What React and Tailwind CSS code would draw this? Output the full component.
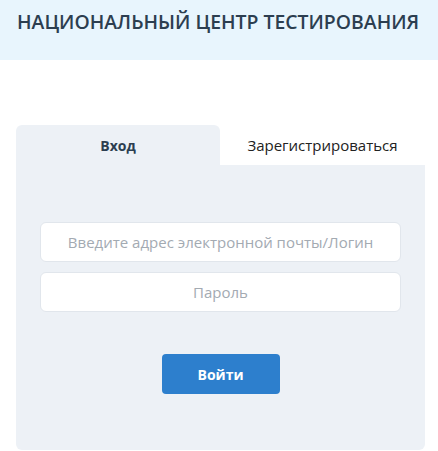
export default function App() {
  return (
    <div className="min-h-[451px] bg-white font-['Open_Sans','Noto_Sans',sans-serif]">
      {/* Header */}
      <header className="h-[60px] bg-[#e8f5fd] pl-[17px] pt-[10px]">
        <h1 className="text-[19.4px] font-semibold leading-6 text-[#2c3e50] whitespace-nowrap">
          НАЦИОНАЛЬНЫЙ ЦЕНТР ТЕСТИРОВАНИЯ
        </h1>
      </header>

      {/* Login card */}
      <div className="mx-4 mt-[65px] w-[409px]">
        <div className="flex h-10">
          <button className="w-[204px] rounded-t-md bg-[#edf1f6] text-[14px] font-bold text-[#2c3e50]">
            Вход
          </button>
          <button className="flex-1 bg-white text-[15px] text-[#222]">
            Зарегистрироваться
          </button>
        </div>
        <div className="h-[285px] rounded-b-md bg-[#edf1f6] px-6 pt-[57px]">
          <div className="flex flex-col gap-[10px]">
            <input
              placeholder="Введите адрес электронной почты/Логин"
              className="h-10 w-full rounded-md border border-[#e1e6ec] bg-white text-center text-[15px] placeholder:text-[#a3aab2] outline-none"
            />
            <input
              type="password"
              placeholder="Пароль"
              className="h-10 w-full rounded-md border border-[#e1e6ec] bg-white text-center text-[15px] placeholder:text-[#a3aab2] outline-none"
            />
          </div>
          <div className="mt-[42px] flex justify-center">
            <button className="h-10 w-[118px] rounded bg-[#2d7fcd] text-[14px] font-bold text-white">
              Войти
            </button>
          </div>
        </div>
      </div>
    </div>
  );
}
